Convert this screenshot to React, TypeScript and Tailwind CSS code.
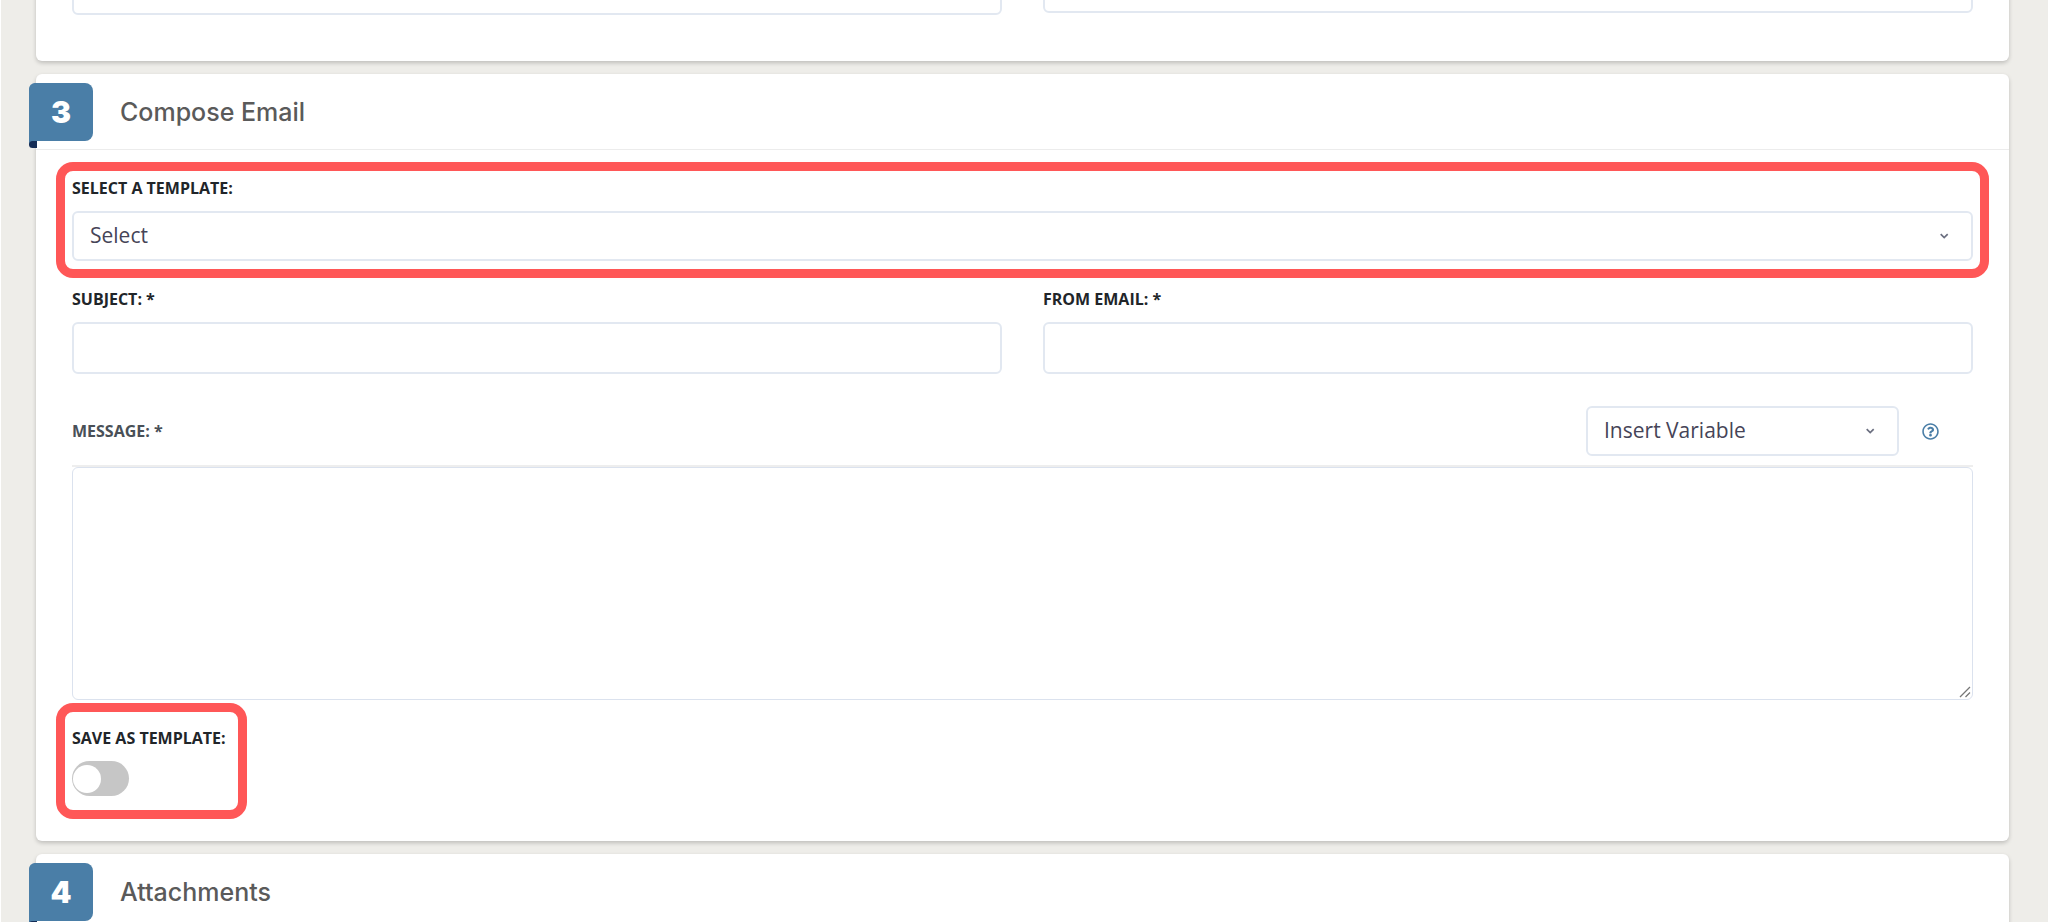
import { useState } from 'react';
import type { ReactNode } from 'react';
import { FaRegQuestionCircle } from 'react-icons/fa';

const labelClass = "block text-base leading-5 font-bold uppercase text-[#212529]";
const fieldClass = "w-full rounded-md border-2 border-[#e2e8f1] bg-white px-4 text-[21px] text-[#464457] outline-none";

function Chevron() {
  return (
    <svg className="absolute right-6 top-1/2 -translate-y-1/2 w-[9px] h-2 pointer-events-none" viewBox="0 0 9 8" fill="none" aria-hidden="true">
      <path d="M0.7 2.2 L4.2 5.6 L7.7 2.2" stroke="#6b6f80" strokeWidth="1.7" />
    </svg>
  );
}

function SelectField({ id, placeholder, label }: { id: string; placeholder: string; label?: string }) {
  return (
    <div className="relative">
      <select id={id} aria-label={label} className={`${fieldClass} block h-[50px] appearance-none`}>
        <option>{placeholder}</option>
      </select>
      <Chevron />
    </div>
  );
}

// Red callout frame drawn around a group of fields
function Highlight() {
  return <div className="absolute -inset-4 rounded-[17px] border-[9px] border-[#ff5757] pointer-events-none" />;
}

function StepCard({ step, title, children }: { step: number; title: string; children?: ReactNode }) {
  return (
    <section className="rounded-md bg-white shadow-[0_2px_4px_rgba(0,0,0,0.2)]">
      <header className="relative flex h-[76px] items-center border-b border-[#ececec] pt-0.5 pl-[84px]">
        {/* Step ribbon hanging over the card edge */}
        <div className="absolute -left-[7px] top-[9px] w-16">
          <div className="w-2 h-[65px] absolute top-0 left-0 rounded-l-md bg-[#4a7ea7]" />
          <div className="w-2 h-[7px] absolute top-[58px] left-0 rounded-l-md bg-[#142c55]" />
          <div className="relative flex h-[58px] items-center justify-center rounded-lg rounded-bl-none bg-[#4a7ea7] font-[Inter] text-3xl font-black text-white">
            {step}
          </div>
        </div>
        <h2 className="font-[Inter] text-[25px] font-medium text-[#5a5a5a]">{title}</h2>
      </header>
      {children}
    </section>
  );
}

export default function App() {
  const [saveAsTemplate, setSaveAsTemplate] = useState(false);

  return (
    <div className="h-screen overflow-hidden border-l border-white bg-[#eeede9] font-['Open_Sans',sans-serif]">
      <main className="-mt-[37px] flex flex-col gap-[13px] pl-[35px] pr-[39px]">
        {/* Tail of the previous step */}
        <section className="grid grid-cols-2 gap-x-[41px] rounded-md bg-white px-9 pb-[46px] shadow-[0_2px_4px_rgba(0,0,0,0.2)]">
          <input aria-label="Recipients" className={`${fieldClass} h-[52px]`} />
          <SelectField id="recipient-type" placeholder="" label="Recipient type" />
        </section>

        <StepCard step={3} title="Compose Email">
          <div className="px-9 pt-7 pb-[38px]">
            <div className="relative pb-px">
              <Highlight />
              <label htmlFor="template" className={`${labelClass} mb-[13px]`}>Select a template:</label>
              <SelectField id="template" placeholder="Select" />
            </div>

            <div className="mt-[27px] grid grid-cols-2 gap-x-[41px]">
              <div>
                <label htmlFor="subject" className={`${labelClass} mb-[13px]`}>Subject: *</label>
                <input id="subject" className={`${fieldClass} block h-[52px]`} />
              </div>
              <div>
                <label htmlFor="from-email" className={`${labelClass} mb-[13px]`}>From email: *</label>
                <input id="from-email" type="email" className={`${fieldClass} block h-[52px]`} />
              </div>
            </div>

            <div className="mt-8 flex items-center justify-between">
              <label htmlFor="message" className="text-base leading-5 font-bold uppercase text-[#495057]">Message: *</label>
              <div className="flex items-center gap-[23px] pr-[34px]">
                <div className="w-[313px]">
                  <SelectField id="variable" placeholder="Insert Variable" label="Insert variable" />
                </div>
                <button type="button" aria-label="Help" className="text-[#4a7ea7]">
                  <FaRegQuestionCircle className="w-[17px] h-[17px]" />
                </button>
              </div>
            </div>

            <div className="relative mt-[9px] border-t-2 border-[#eeeeee]">
              <textarea id="message" className="block h-[233px] w-full resize-none rounded-md border border-[#dbe2ee] bg-white px-4 py-3 text-[21px] text-[#464457] outline-none" />
              <svg className="absolute bottom-0.5 right-0.5 w-3 h-3 pointer-events-none" viewBox="0 0 12 12" aria-hidden="true">
                <path d="M1 11 L11 1 M6.5 11 L11 6.5" stroke="#777" strokeWidth="1.3" />
              </svg>
            </div>

            <div className="relative mt-[19px] w-[159px] pt-[9px] pb-[7px]">
              <Highlight />
              <label htmlFor="save-template" className={`${labelClass} mb-[13px] whitespace-nowrap`}>Save as template:</label>
              <input
                id="save-template"
                type="checkbox"
                role="switch"
                checked={saveAsTemplate}
                onChange={(e) => setSaveAsTemplate(e.target.checked)}
                className="flex h-[35px] w-[57px] appearance-none items-center rounded-full bg-[#c6c6c6] px-px before:h-7 before:w-7 before:rounded-full before:bg-white checked:justify-end checked:bg-[#4a7ea7]"
              />
            </div>
          </div>
        </StepCard>

        <StepCard step={4} title="Attachments" />
      </main>
    </div>
  );
}
